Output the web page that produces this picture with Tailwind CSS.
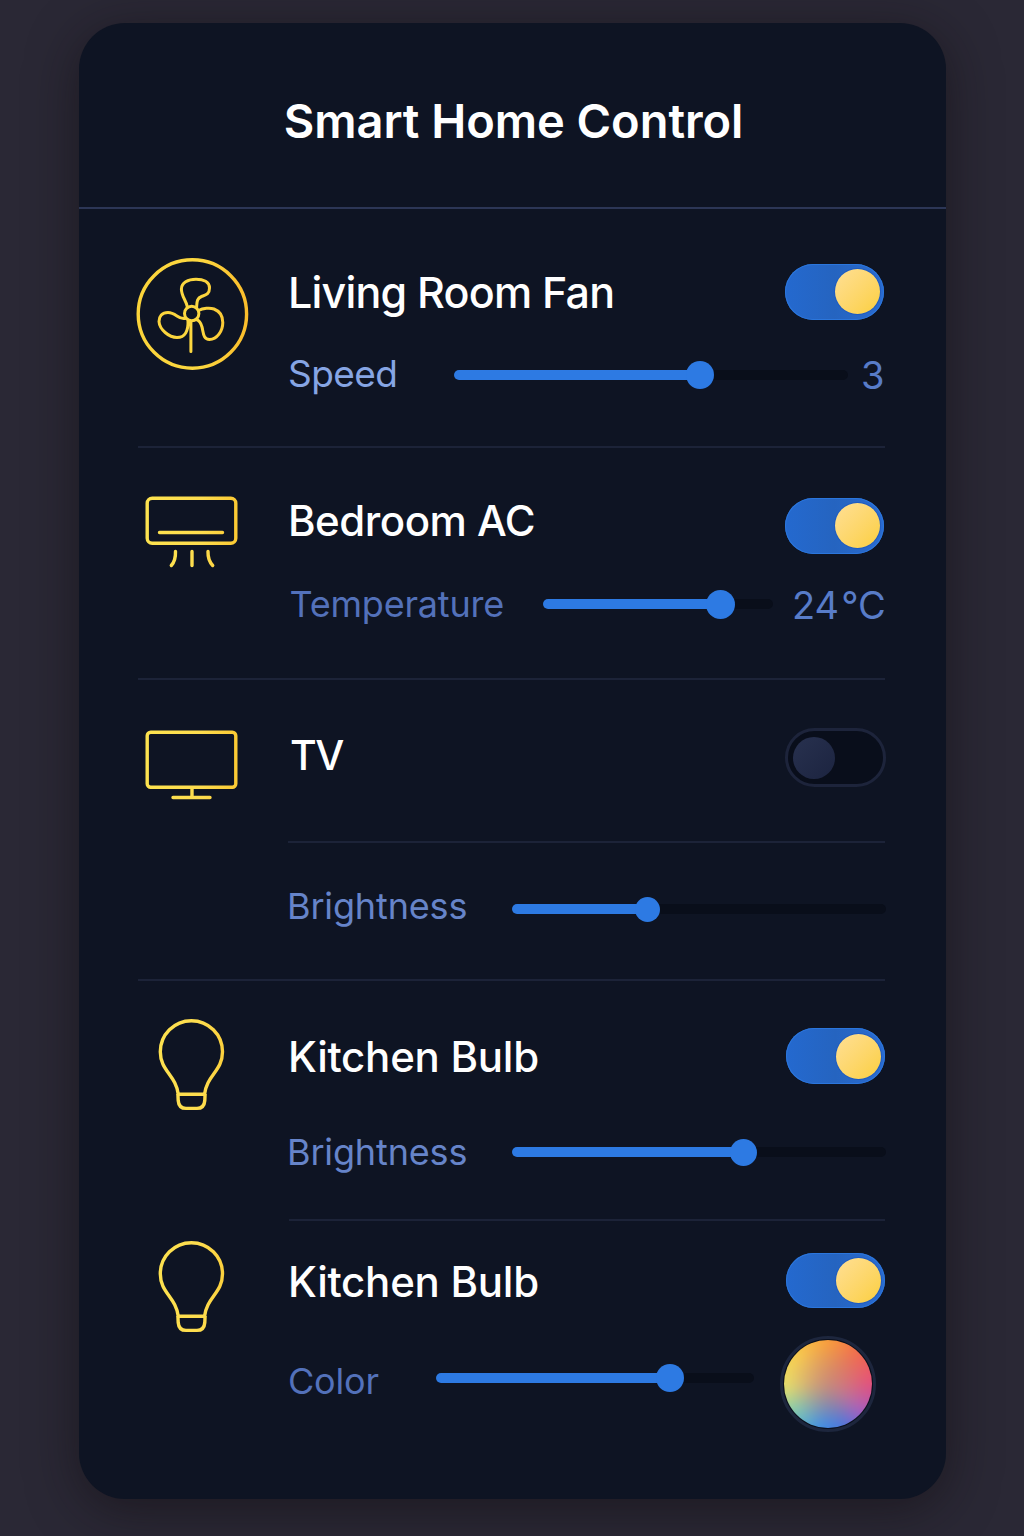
<!DOCTYPE html>
<html lang="en">
<head>
<meta charset="utf-8">
<title>Smart Home Control</title>
<script src="https://cdn.jsdelivr.net/npm/@tailwindcss/browser@4"></script>
</head>
<body class="h-[1536px] w-[1024px] overflow-hidden bg-[#2a2835] pt-[23px] pl-[79px] font-['Inter',sans-serif]">

<svg class="absolute size-0" aria-hidden="true">
  <defs>
    <linearGradient id="gold" gradientUnits="userSpaceOnUse" x1="58" y1="0" x2="169" y2="0">
      <stop offset="0" stop-color="#fbd43a"/>
      <stop offset=".55" stop-color="#fcd840"/>
      <stop offset="1" stop-color="#fbbd2b"/>
    </linearGradient>
    <linearGradient id="lemon" gradientUnits="userSpaceOnUse" x1="66" y1="0" x2="160" y2="0">
      <stop offset="0" stop-color="#fde34f"/>
      <stop offset=".6" stop-color="#fddc4e"/>
      <stop offset="1" stop-color="#fbc932"/>
    </linearGradient>
    <g id="bulb">
      <path d="M99.3 75.5C97 56 81.300 52 81.300 32.800A31.100 31.100 0 0 1 143.500 32.800C143.500 52 127.800 56 125.500 75.500"/>
      <path d="M99 75.300H126M98.900 75L99.200 81.500Q99.800 89.400 107 89.400H118Q125.200 89.400 125.800 81.500L126.100 75"/>
    </g>
  </defs>
</svg>

<main class="flex h-[1476px] w-[867px] flex-col rounded-[46px] bg-[#0e1423] shadow-[0_10px_50px_0_rgba(18,12,16,0.55)]">
  <header class="flex h-[186px] shrink-0 items-center justify-center border-b-2 border-[#2c3656] pt-[10px] pl-[2px]">
    <h1 class="text-[47px] leading-none font-semibold tracking-[-0.050px] text-white">Smart Home Control</h1>
  </header>

  <!-- Living room fan -->
  <section class="flex h-[237px] shrink-0">
    <svg class="h-[200px] w-[208px] shrink-0" viewBox="0 0 208 200" fill="none" stroke="url(#gold)" stroke-width="3.400" stroke-linecap="round" stroke-linejoin="round">
      <circle cx="113.4" cy="105" r="54.2"/>
      <circle cx="112.7" cy="104.5" r="7.2" stroke-width="3"/>
      <path stroke-width="3" d="M108.300 97.800C107 91 102.400 87.500 102.400 80C102.400 74 109 70.200 117 70.200C124.500 70.200 130.500 73 130.500 79C130.500 85.500 126.500 86 122.500 87.500C117.500 89.500 118 93.500 117.600 98.400"/>
      <path stroke-width="3" d="M119.5 101.5C124 99 131 98.500 135 100C141 102.300 143.800 107 143.800 113.500C143.800 122 138 130.500 130.500 130.500C124 130.500 124.500 123.500 123 118C121.800 113.500 120.500 111.500 117.300 110.500"/>
      <path stroke-width="3" d="M106.5 109.3C100 111.500 97 103.500 89 103.500C83 103.500 80 107.500 80 112.500C80.500 120.500 90 128.500 98 128.500C106 128.500 109.500 122 109 111.500M111.900 112.500V142.500"/>
    </svg>
    <div class="flex w-[598px] flex-col pt-[55px]">
      <div class="flex h-[56px] items-center justify-between">
        <h2 class="ml-[1px] text-[43px] leading-none font-medium tracking-[-0.800px] text-white">Living Room Fan</h2>
        <div class="mr-[1px] flex h-[56px] w-[99px] items-center justify-end rounded-full bg-linear-to-r from-[#2469cf] via-[#2564c0] to-[#2a6bd0] pr-[4px] pb-[1px] shadow-[inset_0_0_0_1px_#2b76dc]"><span class="size-[45px] rounded-full bg-linear-to-br from-[#ffdf93] to-[#fbcf3a] shadow-[0_0_0_1px_#1f5bc0]"></span></div>
      </div>
      <div class="mt-[35px] flex h-[40px] items-center">
        <span class="mb-[3px] w-[167px] shrink-0 pl-[1px] text-[37px] leading-none tracking-[-0.600px] text-[#86a5e4]">Speed</span>
        <div class="relative h-[10px] w-[394px] shrink-0 rounded-full bg-[#090e1a]"><div class="h-full rounded-full bg-[#2d7ae3]" style="width:246px"></div><span class="absolute -top-[9px] left-[232px] size-[28px] rounded-full bg-[#2d7ae3]"></span></div>
        <span class="ml-[13px] text-[38px] leading-none text-[#587cc8]">3</span>
      </div>
    </div>
  </section>
  <div class="mr-[61px] ml-[59px] h-[2px] shrink-0 bg-[#1c2338]"></div>

  <!-- Bedroom AC -->
  <section class="flex h-[230px] shrink-0">
    <svg class="h-[200px] w-[208px] shrink-0" viewBox="0 0 208 200" fill="none" stroke="url(#lemon)" stroke-width="3.400" stroke-linecap="round" stroke-linejoin="round">
      <rect x="68.200" y="50.300" width="88.600" height="45" rx="5"/>
      <path d="M80.500 84.500H143.500M96.500 103.500C96.700 110 95.500 114 92.300 117.500M113 103.500V117.500M129 103.500C128.800 110 130.500 114 133.700 117.500"/>
    </svg>
    <div class="flex w-[598px] flex-col pt-[50px]">
      <div class="flex h-[56px] items-center justify-between">
        <h2 class="mb-[11px] ml-[1px] text-[42px] leading-none font-medium tracking-[-0.480px] text-white">Bedroom AC</h2>
        <div class="mr-[1px] flex h-[56px] w-[99px] items-center justify-end rounded-full bg-linear-to-r from-[#2469cf] via-[#2564c0] to-[#2a6bd0] pr-[4px] pb-[1px] shadow-[inset_0_0_0_1px_#2b76dc]"><span class="size-[45px] rounded-full bg-linear-to-br from-[#ffdf93] to-[#fbcf3a] shadow-[0_0_0_1px_#1f5bc0]"></span></div>
      </div>
      <div class="mt-[30px] flex h-[40px] items-center">
        <span class="w-[256px] shrink-0 pl-[2.500px] text-[36px] leading-none tracking-[-0.200px] text-[#5371ba]">Temperature</span>
        <div class="relative h-[10px] w-[230px] shrink-0 rounded-full bg-[#090e1a]"><div class="h-full rounded-full bg-[#2d7ae3]" style="width:177px"></div><span class="absolute -top-[9.500px] left-[163px] size-[29px] rounded-full bg-[#2d7ae3]"></span></div>
        <span class="mt-[1px] ml-[19px] flex shrink-0 gap-[2px] text-[38px] leading-none text-[#587cc8]"><span>24</span><span>°C</span></span>
      </div>
    </div>
  </section>
  <div class="mr-[61px] ml-[59px] h-[2px] shrink-0 bg-[#1c2338]"></div>

  <!-- TV -->
  <section class="flex h-[299px] shrink-0">
    <svg class="h-[200px] w-[208px] shrink-0" viewBox="0 0 208 200" fill="none" stroke="url(#lemon)" stroke-width="3.400" stroke-linecap="round" stroke-linejoin="round">
      <rect x="68.200" y="52.300" width="88.600" height="55" rx="3.500"/>
      <path d="M113 108V117M94 117.500H131"/>
    </svg>
    <div class="flex w-[599px] flex-col pt-[48px]">
      <div class="flex h-[59px] items-center justify-between">
        <h2 class="mb-[5px] ml-[3px] text-[41px] leading-none font-medium tracking-[-1.500px] text-white">TV</h2>
        <div class="flex h-[59px] w-[101px] items-center rounded-full border-[3px] border-[#1d243b] bg-[#090e1b] pl-[5px]"><span class="size-[42px] rounded-full bg-linear-to-br from-[#28314f] to-[#1c2440]"></span></div>
      </div>
      <div class="mt-[54px] mr-[1px] ml-[1px] h-[2px] bg-[#1c2338]"></div>
      <div class="mt-[46px] flex h-[40px] items-center">
        <span class="mb-[7px] w-[225px] text-[36px] leading-none tracking-[-0.150px] text-[#6684c9]">Brightness</span>
        <div class="relative h-[10px] w-[374px] rounded-full bg-[#090e1a]"><div class="h-full rounded-full bg-[#2d7ae3]" style="width:135px"></div><span class="absolute -top-[7px] left-[123px] size-[25px] rounded-full bg-[#2d7ae3]"></span></div>
      </div>
    </div>
  </section>
  <div class="mr-[61px] ml-[59px] h-[2px] shrink-0 bg-[#1c2338]"></div>

  <!-- Kitchen bulb: brightness -->
  <section class="flex h-[238px] shrink-0">
    <svg class="mt-[38px] h-[100px] w-[208px] shrink-0 overflow-visible" viewBox="0 0 208 100" fill="none" stroke="url(#lemon)" stroke-width="3.400" stroke-linejoin="round"><use href="#bulb"/></svg>
    <div class="flex w-[599px] flex-col pt-[47px]">
      <div class="flex h-[56px] items-center justify-between">
        <h2 class="mt-[2px] ml-[1px] text-[42px] leading-none font-medium tracking-[-0.250px] text-white">Kitchen Bulb</h2>
        <div class="mr-[1px] flex h-[56px] w-[99px] items-center justify-end rounded-full bg-linear-to-r from-[#2469cf] via-[#2564c0] to-[#2a6bd0] pr-[4.500px] shadow-[inset_0_0_0_1px_#2b76dc]"><span class="size-[45px] rounded-full bg-linear-to-br from-[#ffdf93] to-[#fbcf3a] shadow-[0_0_0_1px_#1f5bc0]"></span></div>
      </div>
      <div class="mt-[48px] flex h-[40px] items-center">
        <span class="w-[225px] text-[36px] leading-none tracking-[-0.150px] text-[#6684c9]">Brightness</span>
        <div class="relative h-[10px] w-[374px] rounded-full bg-[#090e1a]"><div class="h-full rounded-full bg-[#2d7ae3]" style="width:232px"></div><span class="absolute -top-[8.500px] left-[218px] size-[27px] rounded-full bg-[#2d7ae3]"></span></div>
      </div>
    </div>
  </section>
  <div class="mr-[61px] ml-[210px] h-[2px] shrink-0 bg-[#1c2338]"></div>

  <!-- Kitchen bulb: color -->
  <section class="flex grow">
    <svg class="mt-[20px] h-[100px] w-[208px] shrink-0 overflow-visible" viewBox="0 0 208 100" fill="none" stroke="url(#lemon)" stroke-width="3.400" stroke-linejoin="round"><use href="#bulb"/></svg>
    <div class="flex w-[599px] flex-col pt-[32px]">
      <div class="flex h-[55px] items-center justify-between">
        <h2 class="mt-[3px] ml-[1px] text-[42px] leading-none font-medium tracking-[-0.250px] text-white">Kitchen Bulb</h2>
        <div class="mr-[1px] flex h-[55px] w-[99px] items-center justify-end rounded-full bg-linear-to-r from-[#2469cf] via-[#2564c0] to-[#2a6bd0] pr-[4.500px] shadow-[inset_0_0_0_1px_#2b76dc]"><span class="size-[45px] rounded-full bg-linear-to-br from-[#ffdf93] to-[#fbcf3a] shadow-[0_0_0_1px_#1f5bc0]"></span></div>
      </div>
      <div class="mt-[28px] flex h-[96px] items-center">
        <span class="mb-[7px] w-[149px] pl-[1px] text-[36px] leading-none tracking-[-0.200px] text-[#5371ba]">Color</span>
        <div class="relative mb-[13px] h-[10px] w-[318px] rounded-full bg-[#090e1a]"><div class="h-full rounded-full bg-[#2d7ae3]" style="width:234px"></div><span class="absolute -top-[9px] left-[220px] size-[28px] rounded-full bg-[#2d7ae3]"></span></div>
        <div class="ml-[26px] flex size-[96px] items-center justify-center rounded-full border-[3px] border-[#1d263d] bg-[#0a0f1c]">
          <span class="flex size-[88px] items-center justify-center overflow-hidden rounded-full"><span class="size-[116px] shrink-0 rounded-full bg-[radial-gradient(circle_closest-side,#c98a78_0%,#c98a78cc_18%,#c98a7800_75%),conic-gradient(#fb9f38,#f3694c_45deg,#e64d7c_90deg,#a45cc6_130deg,#4777e0_160deg,#3a8fea_190deg,#7fd0b4_232deg,#e6e26c_265deg,#fbd34e_310deg,#fb9f38)] blur-[7px]"></span></span>
        </div>
      </div>
    </div>
  </section>
</main>
</body>
</html>
